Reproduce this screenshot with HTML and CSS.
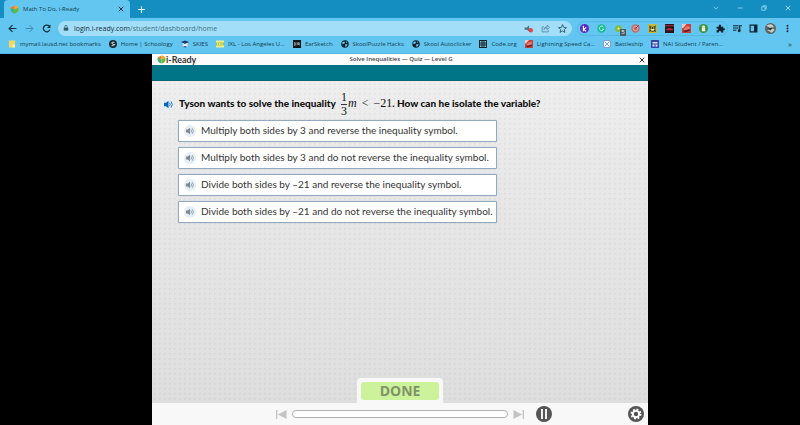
FILE: index.html
```html
<!DOCTYPE html>
<html lang="en">
<head>
    <meta charset="UTF-8">
    <meta name="viewport" content="width=device-width, initial-scale=1.0">
    <title>Math To Do, i-Ready</title>
    <link rel="stylesheet" href="styles.css">
</head>
<body>
    <svg class="defs" aria-hidden="true">
        <symbol id="logo" viewBox="0 0 16 16">
            <path d="M8 8V1L2 4Q1 5 1 6z" fill="#f0783c"/>
            <path d="M8 1q5 0 7 4L8 8z" fill="#f7a823"/>
            <path d="M1 5l7 3v7Q2 14 1 9z" fill="#3bb878"/>
            <path d="M15 5L8 8v7q6-1 7-6z" fill="#6fb52c"/>
        </symbol>
        <symbol id="speaker" viewBox="0 0 16 16">
            <path d="M0 5h3.500L8 1.500v13L3.500 11H0z" fill="currentColor"/>
            <path d="M10 5q2 3 0 6M12.500 2.500q4.500 5.500 0 11" fill="none" stroke="currentColor" stroke-width="1.500"/>
        </symbol>
        <symbol id="globe" viewBox="0 0 16 16">
            <circle cx="8" cy="8" r="7.500" fill="#14252e"/>
            <path d="M3 4l4-1 1 3-3 2-3-1zM8 9l5-1-1 4-3 2zM10 2l3 3-2 1z" fill="#62c6f0"/>
        </symbol>
        <symbol id="car" viewBox="0 0 16 16">
            <path d="M0 0h16v16H0z" fill="#c8403c"/>
            <path d="M0 0h8L2 7H0z" fill="#f0c8c0"/>
            <path d="M3 9l5-5 6 1v4l-8 4z" fill="#e87870"/>
            <path d="M2 12l12-3v3l-9 3z" fill="#6c1c20"/>
        </symbol>
    </svg>

    <header class="browser">
        <div class="tabstrip">
            <div class="tab">
                <svg class="icon"><use href="#logo"/></svg>
                <span class="tab-title">Math To Do, i-Ready</span>
                <button class="btn" aria-label="Close tab"><svg class="icon small" viewBox="0 0 16 16"><path d="M2 2l12 12M14 2L2 14" stroke="#102838" stroke-width="2.500"/></svg></button>
            </div>
            <button class="btn new-tab" aria-label="New tab"><svg class="icon" viewBox="0 0 16 16"><path d="M8 2v12M2 8h12" stroke="#e8f8ff" stroke-width="2"/></svg></button>
            <div class="window-buttons">
                <button class="btn" aria-label="Tab search"><svg class="icon small" viewBox="0 0 16 16"><path d="M2 5l6 6 6-6" fill="none" stroke="#9fe0f8" stroke-width="2"/></svg></button>
                <button class="btn" aria-label="Minimize"><svg class="icon small" viewBox="0 0 16 16"><path d="M2 8h13" stroke="#9fe0f8" stroke-width="2"/></svg></button>
                <button class="btn" aria-label="Restore"><svg class="icon small" viewBox="0 0 16 16"><path d="M2 5h9v9H2zM5 5V2h9v9h-3" fill="none" stroke="#9fe0f8" stroke-width="2" stroke-linejoin="round"/></svg></button>
                <button class="btn" aria-label="Close"><svg class="icon small" viewBox="0 0 16 16"><path d="M2 2l12 12M14 2L2 14" stroke="#c8f0ff" stroke-width="2"/></svg></button>
            </div>
        </div>

        <div class="toolbar">
            <div class="nav">
                <button class="btn" aria-label="Back"><svg class="icon" viewBox="0 0 16 16"><path d="M15 8H2M8 2L2 8l6 6" fill="none" stroke="#12303e" stroke-width="2"/></svg></button>
                <button class="btn" aria-label="Forward"><svg class="icon" viewBox="0 0 16 16"><path d="M1 8h13M8 2l6 6-6 6" fill="none" stroke="#3c86a8" stroke-width="1.600"/></svg></button>
                <button class="btn" aria-label="Reload"><svg class="icon" viewBox="0 0 16 16"><path d="M13 4a6 6 0 1 0 1 6" fill="none" stroke="#12303e" stroke-width="2.200"/><path d="M15 1v6H9z" fill="#12303e"/></svg></button>
            </div>
            <div class="omnibox">
                <svg class="icon small" viewBox="0 0 16 16"><path d="M2 7h12v8H2z" fill="#31596c"/><path d="M5 7V4q0-3 3-3t3 3v3" fill="none" stroke="#31596c" stroke-width="2"/></svg>
                <span class="url">login.i-ready.com<span class="path">/student/dashboard/home</span></span>
                <div class="page-actions">
                    <button class="btn" aria-label="Muted"><svg class="icon" viewBox="0 0 16 16"><path d="M1 6h4l4-4v11l-4-3H1z" fill="#54707e"/><circle cx="12" cy="11" r="4" fill="#e04848"/></svg></button>
                    <button class="btn" aria-label="Share"><svg class="icon" viewBox="0 0 16 16"><path d="M5 5H2v9h11v-3M5 10q1-5 6-5V2l4 4-4 4V7q-4 0-6 3z" fill="none" stroke="#4a7c92" stroke-width="1.300"/></svg></button>
                    <button class="btn" aria-label="Bookmark"><svg class="icon" viewBox="0 0 16 16"><path d="M8 1l2 5 5 .5-4 3.500 1.300 5L8 12.300 3.700 15 5 10 1 6.500 6 6z" fill="none" stroke="#1f4a5e" stroke-width="1.400"/></svg></button>
                </div>
            </div>
            <div class="extensions">
                <svg class="icon" viewBox="0 0 16 16"><circle cx="8" cy="8" r="8" fill="#5b2bc8"/><path d="M6 3v10M11 6L6.500 9.500 11 13" fill="none" stroke="#fff" stroke-width="2"/></svg>
                <svg class="icon" viewBox="0 0 16 16"><circle cx="8" cy="8" r="7.500" fill="#18b892"/><path d="M11.500 5.500a4 4 0 1 0 .5 3.500H9" fill="none" stroke="#c8ffe8" stroke-width="1.600"/></svg>
                <span class="ext"><svg class="icon" viewBox="0 0 16 16"><circle cx="8" cy="8" r="6" fill="#86b83c"/><circle cx="8" cy="8" r="2" fill="#e8f0a0"/></svg><span class="badge">5</span></span>
                <svg class="icon" viewBox="0 0 16 16"><circle cx="8" cy="8" r="7.500" fill="#c0706c"/><circle cx="8" cy="8" r="4" fill="none" stroke="#e8b0a8" stroke-width="1.500"/><path d="M8 8l6-6" stroke="#784040" stroke-width="1.500"/></svg>
                <svg class="icon" viewBox="0 0 16 16"><path d="M0 0h16v16H0z" fill="#c8b83c"/><path d="M2 2l4 3h4l4-3-1 6 1 6-3-1-3 1-3-1-3 1 1-6z" fill="#3c401c"/><path d="M5 6h2v2H5zM9 6h2v2H9zM4 9h8l-2 3H6z" fill="#f0e8a0"/></svg>
                <svg class="icon" viewBox="0 0 16 16"><path d="M0 0h16v16H0z" fill="#28161c"/><path d="M0 2h16v2H0zM2 9l6-2 6 2v2H2z" fill="#b82838"/></svg>
                <svg class="icon"><use href="#car"/></svg>
                <svg class="icon" viewBox="0 0 16 16"><circle cx="8" cy="8" r="8" fill="#3c9040"/><path d="M5 7h6v6H5z" fill="#f0f8e8"/><circle cx="8" cy="5" r="3" fill="#d8e8b0"/></svg>
                <svg class="icon" viewBox="0 0 16 16"><path d="M1 5h4q-1-4 2-4t2 4h4v3q3-1 3 1.500T13 11v4h-4q0-3-2-3t-2 3H1v-4q3 0 3-1.500T1 8z" fill="#102430"/></svg>
            </div>
            <div class="tools">
                <button class="btn" aria-label="Media"><svg class="icon" viewBox="0 0 16 16"><path d="M0 3h10M0 7h10M0 11h6M12 12V3h4" fill="none" stroke="#102430" stroke-width="2"/><circle cx="11" cy="12" r="2.500" fill="#102430"/></svg></button>
                <button class="btn" aria-label="Side panel"><svg class="icon" viewBox="0 0 16 16"><path d="M2 2h12v12H2z" fill="none" stroke="#102430" stroke-width="2"/><path d="M9 2h5v12H9z" fill="#102430"/></svg></button>
                <button class="btn" aria-label="Profile"><svg class="icon avatar" viewBox="0 0 16 16"><circle cx="8" cy="8" r="8" fill="#5e6664"/><path d="M2 4q5-4 9-1l2 3-6 1zM3 10l9-2 2 2-4 4z" fill="#c8d0c8"/><path d="M4 8l7-1-3 4z" fill="#262c2c"/></svg></button>
                <button class="btn" aria-label="Menu"><svg class="icon" viewBox="0 0 16 16"><circle cx="8" cy="3" r="1.700" fill="#102430"/><circle cx="8" cy="8" r="1.700" fill="#102430"/><circle cx="8" cy="13" r="1.700" fill="#102430"/></svg></button>
            </div>
        </div>

        <nav class="bookmarks">
            <a href="#"><svg class="icon" viewBox="0 0 16 16"><path d="M2 1h12v14H2z" fill="#f4d860"/><path d="M9 9h5v6H9z" fill="#fbeea8"/></svg>mymail.lausd.net bookmarks</a>
            <a href="#"><svg class="icon" viewBox="0 0 16 16"><circle cx="8" cy="8" r="8" fill="#1c2a32"/><path d="M11 5Q5 3 5.500 6t5 3-5.500 2.500" fill="none" stroke="#e0f0f8" stroke-width="1.800"/></svg>Home | Schoology</a>
            <a href="#"><svg class="icon" viewBox="0 0 16 16"><path d="M0 4l8-3 8 3-8 4z" fill="#20386c"/><path d="M3 6l5 2 5-2v8H4z" fill="#f0e4e0"/><path d="M5 12h6v3H5z" fill="#3c70b8"/></svg>SKIES</a>
            <a href="#"><svg class="icon" viewBox="0 0 16 16"><path d="M0 1h16v14H0z" fill="#e8f090"/><path d="M0 5h16v6H0z" fill="#b4c034"/><path d="M3 6v4M6 6l3 4M9 6l-3 4M12 6v4h2" stroke="#fff" fill="none"/></svg>IXL - Los Angeles U...</a>
            <a href="#"><svg class="icon" viewBox="0 0 16 16"><path d="M0 0h16v16H0z" fill="#101418"/><path d="M3 4v8M5 5v6M8 11V5l3 5V4M13 5v6" stroke="#e0e0e0" fill="none"/></svg>EarSketch</a>
            <a href="#"><svg class="icon"><use href="#globe"/></svg>SkoolPuzzle Hacks</a>
            <a href="#"><svg class="icon"><use href="#globe"/></svg>Skool Autoclicker</a>
            <a href="#"><svg class="icon" viewBox="0 0 16 16"><path d="M0 0h16v16H0z" fill="#14222a"/><path d="M2 2h3v3H2zM7 2h2v3H7zM11 2h3v3h-3zM2 7h3v2H2zM7 7h2v2H7zM11 7h3v2h-3zM2 11h3v3H2zM7 11h2v3H7zM11 11h3v3h-3z" fill="#8cc8e0"/></svg>Code.org</a>
            <a href="#"><svg class="icon"><use href="#car"/></svg>Lightning Speed Ca...</a>
            <a href="#"><svg class="icon" viewBox="0 0 16 16"><path d="M0 0h16v16H0z" fill="#f0f8ff"/><path d="M1 1h14v14H1zM3 3l10 10M13 3L3 13" fill="none" stroke="#5c80d0" stroke-width="1.500"/></svg>Battleship</a>
            <a href="#"><svg class="icon" viewBox="0 0 16 16"><path d="M0 0h16v16H0z" fill="#3444a8"/><path d="M3 4h10v3H3zM3 9h4v4H3zM9 9h4v4H9z" fill="#e0e8ff"/></svg>NAI Student / Paren...</a>
            <button class="btn more" aria-label="More bookmarks">»</button>
        </nav>
    </header>

    <main class="lesson">
        <div class="lesson-header">
            <div class="brand"><svg class="icon"><use href="#logo"/></svg>i-Ready</div>
            <h1>Solve Inequalities — Quiz — Level G</h1>
            <button class="btn close" aria-label="Close lesson"><svg class="icon small" viewBox="0 0 16 16"><path d="M2 2l12 12M14 2L2 14" stroke="#222" stroke-width="2.500"/></svg></button>
        </div>
        <div class="banner"></div>

        <section class="stage">
            <div class="question">
                <button class="btn audio main-audio" aria-label="Read question"><svg class="icon"><use href="#speaker"/></svg></button>
                <p>Tyson wants to solve the inequality
                    <span class="math"><span class="fraction"><span>1</span><span class="den">3</span></span><i>m</i><span class="op">&lt;</span>−21</span>. How can he isolate the variable?</p>
            </div>
            <div class="answers">
                <div class="answer"><button class="btn audio" aria-label="Read answer 1"><svg class="icon"><use href="#speaker"/></svg></button><button class="btn choice">Multiply both sides by 3 and reverse the inequality symbol.</button></div>
                <div class="answer"><button class="btn audio" aria-label="Read answer 2"><svg class="icon"><use href="#speaker"/></svg></button><button class="btn choice">Multiply both sides by 3 and do not reverse the inequality symbol.</button></div>
                <div class="answer"><button class="btn audio" aria-label="Read answer 3"><svg class="icon"><use href="#speaker"/></svg></button><button class="btn choice">Divide both sides by –21 and reverse the inequality symbol.</button></div>
                <div class="answer"><button class="btn audio" aria-label="Read answer 4"><svg class="icon"><use href="#speaker"/></svg></button><button class="btn choice">Divide both sides by –21 and do not reverse the inequality symbol.</button></div>
            </div>
            <div class="done-box"><button class="done">DONE</button></div>
        </section>

        <footer class="player">
            <div class="seek">
                <button class="btn" aria-label="Previous"><svg class="step" viewBox="0 0 12 12"><path d="M0 1h1.500v10H0zM11.500 1v10L2 6z" fill="#c4c4c4"/></svg></button>
                <div class="progress"></div>
                <button class="btn" aria-label="Next"><svg class="step" viewBox="0 0 12 12"><path d="M10.500 1H12v10h-1.500zM.5 1v10L10 6z" fill="#c4c4c4"/></svg></button>
            </div>
            <button class="btn pause" aria-label="Pause"><svg class="round" viewBox="0 0 16 16"><circle cx="8" cy="8" r="8" fill="#555"/><path d="M6 3v10M10 3v10" stroke="#fff" stroke-width="1.800"/></svg></button>
            <button class="btn settings" aria-label="Settings"><svg class="round" viewBox="0 0 16 16"><circle cx="8" cy="8" r="8" fill="#555"/><circle cx="8" cy="8" r="3.200" fill="none" stroke="#fff" stroke-width="2"/><circle cx="8" cy="8" r="4.700" fill="none" stroke="#fff" stroke-width="1.600" stroke-dasharray="1.850 1.841"/></svg></button>
        </footer>
    </main>
</body>
</html>
```
FILE: styles.css
```css
*{
    margin: 0;
    padding: 0;
    box-sizing: border-box;
}
body{
    display: flex;
    flex-direction: column;
    height: 100vh;
    background-color: #000;
    font-family: "Open Sans", "Noto Sans", sans-serif;
    overflow: hidden;
}
.defs{
    position: absolute;
    width: 0;
    height: 0;
}
.btn{
    display: flex;
    align-items: center;
    justify-content: center;
    border: none;
    background: none;
    font: inherit;
    color: inherit;
    cursor: pointer;
}
.icon{
    display: block;
    width: 9px;
    height: 9px;
    flex-shrink: 0;
}
.icon.small{
    width: 6px;
    height: 6px;
}

/* browser */
.browser{
    background-color: #62c6f0;
    color: #173c4e;
    font-size: 6px;
    border-bottom: 1px solid #58b4dc;
}
.tabstrip{
    display: flex;
    align-items: stretch;
    height: 18px;
    padding-left: 4px;
    background-color: #148ec0;
}
.tab{
    display: flex;
    align-items: center;
    gap: 4px;
    width: 126px;
    padding: 0 6px;
    background-color: #62c6f0;
    border-radius: 4px 4px 0 0;
}
.tab-title{
    flex: 1;
}
.new-tab{
    width: 22px;
}
.window-buttons{
    display: flex;
    gap: 18px;
    margin-left: auto;
    padding: 0 9px 2px 0;
}
.toolbar{
    display: flex;
    align-items: center;
    gap: 5px;
    height: 20px;
    padding: 0 8px;
}
.nav{
    display: flex;
    gap: 8px;
    margin-right: 2px;
}
.omnibox{
    display: flex;
    flex: 1;
    align-items: center;
    gap: 5px;
    height: 15px;
    padding: 0 5px;
    border-radius: 8px;
    background-color: #a2def7;
}
.url{
    flex: 1;
    font-size: 7px;
    color: #12303e;
}
.path{
    color: #3f7288;
}
.page-actions{
    display: flex;
    gap: 8px;
}
.page-actions .icon, .extensions .icon{
    width: 9px;
    height: 9px;
}
.extensions{
    display: flex;
    align-items: center;
    gap: 8px;
    height: 15px;
    padding: 0 2px;
    border: 1px solid #56b8e2;
    border-radius: 8px;
}
.ext{
    position: relative;
}
.badge{
    position: absolute;
    right: -3px;
    bottom: -3px;
    width: 6px;
    height: 7px;
    background-color: #4c5c64;
    color: #fff;
    font-size: 6px;
    line-height: 7px;
    text-align: center;
}
.tools{
    display: flex;
    align-items: center;
    gap: 7px;
}
.icon.avatar{
    width: 11px;
    height: 11px;
}
.bookmarks{
    display: flex;
    align-items: center;
    gap: 8px;
    height: 15px;
    padding: 0 8px 3px;
    white-space: nowrap;
}
.bookmarks a{
    display: flex;
    align-items: center;
    gap: 4px;
    color: inherit;
    text-decoration: none;
}
.bookmarks .icon{
    width: 8px;
    height: 8px;
}
.more{
    margin-left: auto;
    padding-bottom: 2px;
    font-size: 8px;
}

/* lesson */
.lesson{
    display: flex;
    flex: 1;
    flex-direction: column;
    width: 62%;
    margin: 0 auto;
    background-color: #f8f8f8;
}
.lesson-header{
    display: grid;
    grid-template-columns: 1fr auto 1fr;
    align-items: center;
    height: 11px;
    padding: 0 3px 0 5px;
    background-color: #fcfcfc;
}
.brand{
    display: flex;
    align-items: center;
    font-family: Lato, sans-serif;
    font-size: 9px;
    font-weight: bold;
    line-height: 11px;
    color: #333;
}
.lesson-header h1{
    font-size: 6px;
    font-weight: 600;
    line-height: 11px;
    color: #444;
}
.close{
    justify-self: end;
}
.banner{
    height: 16px;
    background-color: #007587;
    border-bottom: 1px solid #056477;
}
.stage{
    display: flex;
    flex: 1;
    flex-direction: column;
    padding: 10px 10px 0;
    background-color: #e4e4e4;
    background-image: radial-gradient(circle, rgba(0, 0, 0, .04) 1px, transparent 1px), linear-gradient(#eee, #e8e8e8 30%, #dedede);
    background-size: 5px 5px, 100% 100%;
}
.question{
    display: flex;
    align-items: center;
    gap: 5px;
    height: 26px;
    font-family: Lato, sans-serif;
    font-size: 10px;
    font-weight: 900;
    color: #111;
    white-space: nowrap;
}
.audio{
    width: 12px;
    height: 12px;
    border-radius: 50%;
    background-color: #e4eff7;
    color: #7c8a94;
    flex-shrink: 0;
}
.main-audio{
    color: #0d63b8;
}
.math{
    margin-left: 2px;
    font-family: "Liberation Serif", serif;
    font-weight: normal;
    font-size: 12px;
}
.fraction{
    display: inline-flex;
    flex-direction: column;
    align-items: center;
    vertical-align: middle;
    margin: 0 1px;
    line-height: 13px;
}
.den{
    border-top: 1px solid #333;
}
.op{
    padding: 0 5px;
}
.answers{
    display: flex;
    flex-direction: column;
    align-items: stretch;
    gap: 5px;
    width: 67%;
    margin-left: 16px;
    padding-top: 3px;
}
.answer{
    display: flex;
    align-items: center;
    gap: 5px;
    height: 22px;
    padding: 0 5px;
    border: 1px solid #93a9bf;
    border-radius: 1px;
    background-color: #fff;
    box-shadow: 0 0 1px #93a9bf;
}
.answer .icon{
    width: 8px;
    height: 8px;
}
.choice{
    flex: 1;
    justify-content: flex-start;
    padding-bottom: 2px;
    font-family: Lato, sans-serif;
    font-size: 10px;
    color: #333;
    white-space: nowrap;
}
.done-box{
    align-self: center;
    margin-top: auto;
    padding: 4px 4px 3px;
    border-radius: 4px 4px 0 0;
    background-color: #f8f8f8;
}
.done{
    display: block;
    width: 78px;
    height: 18px;
    border: none;
    border-radius: 3px;
    background-color: #cdf29c;
    color: #7f9468;
    font-family: "Open Sans", sans-serif;
    font-size: 14px;
    font-weight: bold;
    line-height: 18px;
    cursor: pointer;
}
.player{
    display: grid;
    grid-template-columns: 1fr 51% 1fr;
    align-items: center;
    height: 22px;
    padding: 0 4px;
}
.seek{
    display: flex;
    grid-column: 2;
    align-items: center;
    gap: 5px;
}
.step{
    display: block;
    width: 11px;
    height: 11px;
}
.progress{
    flex: 1;
    height: 8px;
    border: 1px solid #b0b0b0;
    border-radius: 4px;
    background-color: #fff;
}
.round{
    display: block;
    width: 16px;
    height: 16px;
}
.pause, .settings{
    grid-row: 1;
    grid-column: 3;
}
.pause{
    justify-self: start;
    margin-left: 12px;
}
.settings{
    justify-self: end;
}
```
